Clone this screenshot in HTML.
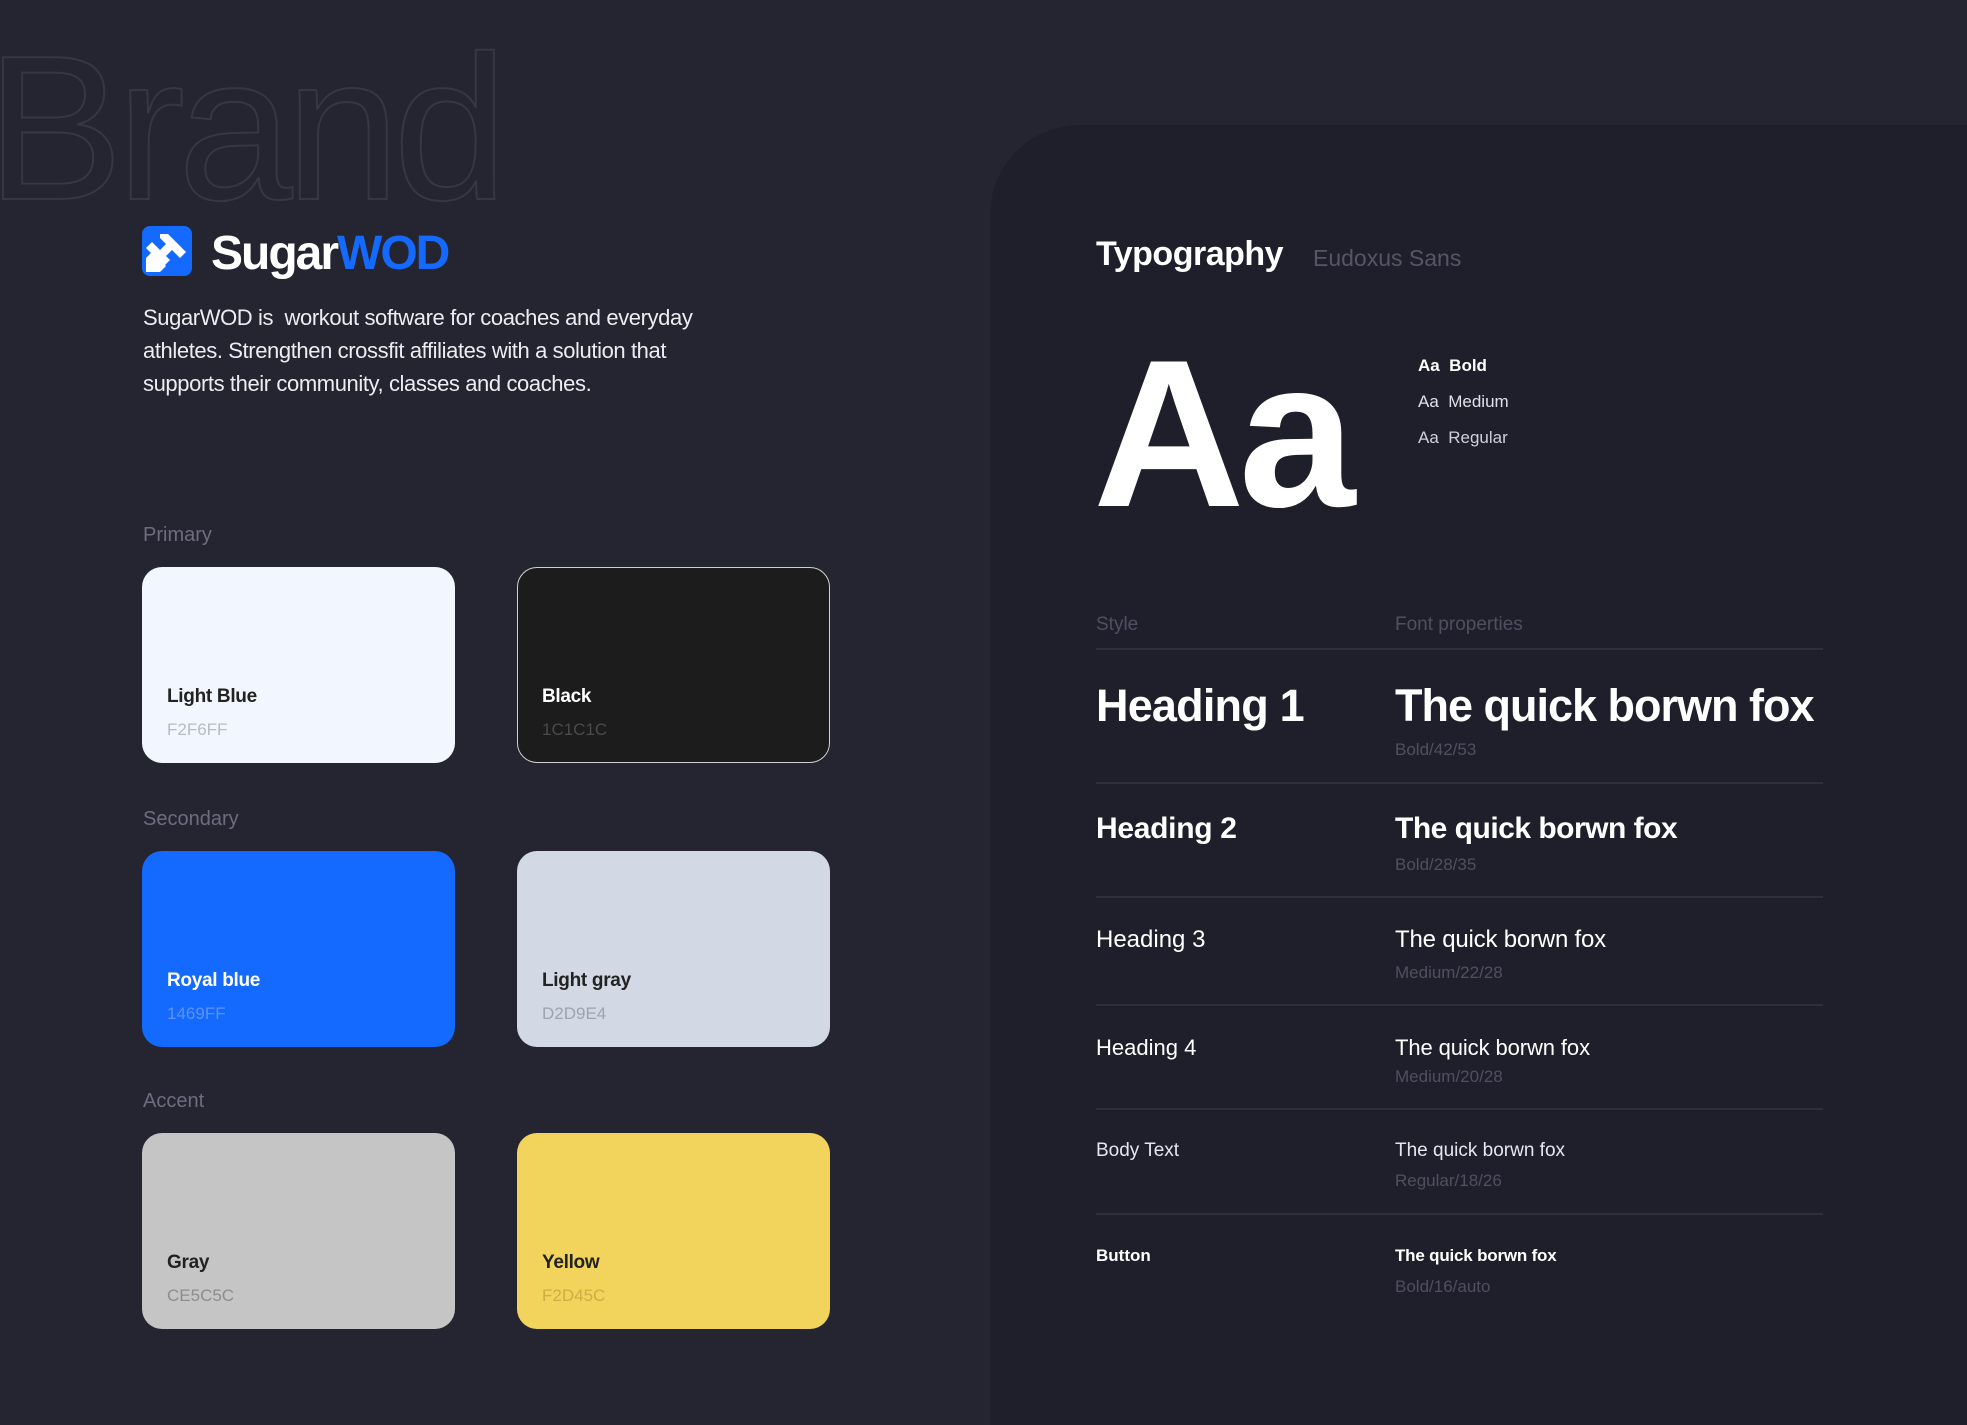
<!DOCTYPE html>
<html><head><meta charset="utf-8"><style>
*{margin:0;padding:0;box-sizing:border-box}
body{width:1967px;height:1407px;background:#252531;position:relative;overflow:hidden;font-family:"Liberation Sans",sans-serif;color:#fff}
.a{position:absolute;white-space:nowrap}
.panel{position:absolute;left:990px;top:125px;width:977px;height:1300px;background:#1f1f2c;border-top-left-radius:90px}
.card{position:absolute;width:313px;height:196px;border-radius:20px}
.cn{position:absolute;left:25px;top:119px;font-size:19px;font-weight:bold;letter-spacing:-0.3px}
.ch{position:absolute;left:25px;top:153px;font-size:17px}
.lbl{font-size:20px;color:#6d6d80}
.line{position:absolute;left:1096px;width:727px;height:2px;background:#2e2e3c}
.sub{font-size:17px;color:#4f4f60}
</style></head><body>
<svg class="a" style="left:0;top:0" width="520" height="210"><text x="-14" y="199" font-family="Liberation Sans" font-size="206" fill="none" stroke="#363644" stroke-width="2" letter-spacing="-7">Brand</text></svg>
<svg class="a" style="left:142px;top:226px" width="50" height="50" viewBox="0 0 50 50"><rect width="50" height="50" rx="8" fill="#1469ff"/><polygon points="4,22 10,16 28,34 22,40" fill="#fff"/><polygon points="4,32 10,26 24,40 18,46 4,46" fill="#fff"/><polygon points="18,8 26,8 44,26 38,32 30,24 24,30 18,24 24,18 18,12" fill="#fff"/></svg>
<div class="a" style="left:211px;top:224px;font-size:48px;font-weight:bold;letter-spacing:-2px;line-height:60px">Sugar<span style="color:#1469ff">WOD</span></div>
<div class="a" style="left:143px;top:301px;font-size:22px;line-height:33px;color:#ececf2;letter-spacing:-0.4px">SugarWOD is&nbsp; workout software for coaches and everyday<br>athletes. Strengthen crossfit affiliates with a solution that<br>supports their community, classes and coaches.</div>
<div class="a lbl" style="left:143px;top:524px">Primary</div>
<div class="a lbl" style="left:143px;top:808px">Secondary</div>
<div class="a lbl" style="left:143px;top:1090px">Accent</div>
<div class="card" style="left:142px;top:567px;background:#f2f6ff"><div class="cn" style="color:#222">Light Blue</div><div class="ch" style="color:#b8bac4">F2F6FF</div></div>
<div class="card" style="left:517px;top:567px;background:#1c1c1c;border:1.5px solid #d0d0d0"><div class="cn" style="left:24px;top:118px">Black</div><div class="ch" style="left:24px;top:152px;color:#4a4a4a">1C1C1C</div></div>
<div class="card" style="left:142px;top:851px;background:#1469ff"><div class="cn">Royal blue</div><div class="ch" style="color:#5b95ff">1469FF</div></div>
<div class="card" style="left:517px;top:851px;background:#d2d9e4"><div class="cn" style="color:#222">Light gray</div><div class="ch" style="color:#9ea4ae">D2D9E4</div></div>
<div class="card" style="left:142px;top:1133px;background:#c5c5c5"><div class="cn" style="color:#222">Gray</div><div class="ch" style="color:#8d8d8d">CE5C5C</div></div>
<div class="card" style="left:517px;top:1133px;background:#f2d45c"><div class="cn" style="color:#222">Yellow</div><div class="ch" style="color:#c9ae44">F2D45C</div></div>
<div class="panel"></div>
<div class="a" style="left:1096px;top:235px;font-size:34px;font-weight:bold;letter-spacing:-0.5px">Typography</div>
<div class="a" style="left:1313px;top:245px;font-size:23px;color:#555565">Eudoxus Sans</div>
<div class="a" style="left:1093px;top:314px;font-size:210px;font-weight:bold;line-height:240px;letter-spacing:-6px">Aa</div>
<div class="a" style="left:1418px;top:356px;font-size:17px;font-weight:bold">Aa&nbsp; Bold</div>
<div class="a" style="left:1418px;top:392px;font-size:17px;color:#e0e0e8">Aa&nbsp; Medium</div>
<div class="a" style="left:1418px;top:428px;font-size:17px;color:#d0d0da">Aa&nbsp; Regular</div>
<div class="a" style="left:1096px;top:614px;font-size:19px;color:#4f4f60">Style</div>
<div class="a" style="left:1395px;top:614px;font-size:19px;color:#4f4f60">Font properties</div>
<div class="line" style="top:648px"></div>
<div class="a" style="left:1096px;top:680px;font-size:45px;font-weight:bold;letter-spacing:-0.8px">Heading 1</div>
<div class="a" style="left:1395px;top:680px;font-size:45px;font-weight:bold;letter-spacing:-1px">The quick borwn fox</div>
<div class="a sub" style="left:1395px;top:740px">Bold/42/53</div>
<div class="line" style="top:782px"></div>
<div class="a" style="left:1096px;top:812px;font-size:30px;font-weight:bold;letter-spacing:-0.3px">Heading 2</div>
<div class="a" style="left:1395px;top:812px;font-size:30px;font-weight:bold;letter-spacing:-0.5px">The quick borwn fox</div>
<div class="a sub" style="left:1395px;top:855px">Bold/28/35</div>
<div class="line" style="top:896px"></div>
<div class="a" style="left:1096px;top:926px;font-size:24px">Heading 3</div>
<div class="a" style="left:1395px;top:926px;font-size:24px;letter-spacing:-0.2px">The quick borwn fox</div>
<div class="a sub" style="left:1395px;top:963px">Medium/22/28</div>
<div class="line" style="top:1004px"></div>
<div class="a" style="left:1096px;top:1035px;font-size:22px">Heading 4</div>
<div class="a" style="left:1395px;top:1035px;font-size:22px;letter-spacing:-0.1px">The quick borwn fox</div>
<div class="a sub" style="left:1395px;top:1067px">Medium/20/28</div>
<div class="line" style="top:1108px"></div>
<div class="a" style="left:1096px;top:1140px;font-size:19px;color:#e6e6ee">Body Text</div>
<div class="a" style="left:1395px;top:1140px;font-size:19px;color:#e6e6ee">The quick borwn fox</div>
<div class="a sub" style="left:1395px;top:1171px">Regular/18/26</div>
<div class="line" style="top:1213px"></div>
<div class="a" style="left:1096px;top:1246px;font-size:17px;font-weight:bold">Button</div>
<div class="a" style="left:1395px;top:1246px;font-size:17px;font-weight:bold;letter-spacing:-0.2px">The quick borwn fox</div>
<div class="a sub" style="left:1395px;top:1277px">Bold/16/auto</div>
</body></html>
